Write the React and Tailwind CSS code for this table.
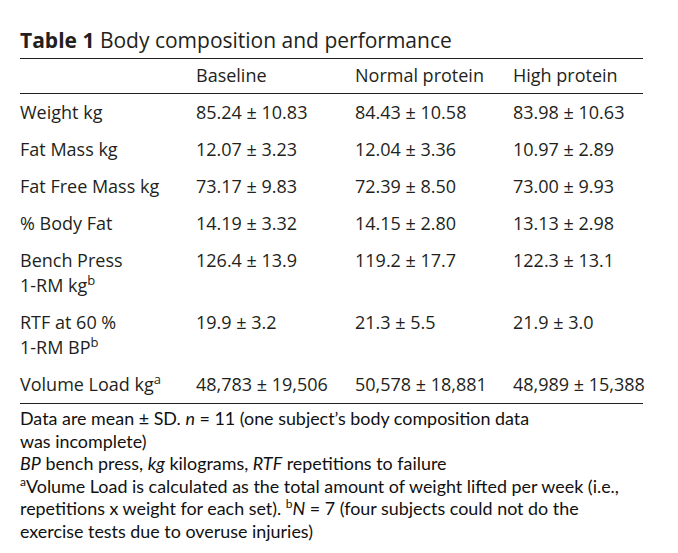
import React from "react";

const Sup = ({ children }) => (
  <sup className="text-[13px] top-[-0.55em]">{children}</sup>
);

const rows = [
  { label: <>Weight kg</>, v: ["85.24 ± 10.83", "84.43 ± 10.58", "83.98 ± 10.63"] },
  { label: <>Fat Mass kg</>, v: ["12.07 ± 3.23", "12.04 ± 3.36", "10.97 ± 2.89"] },
  { label: <>Fat Free Mass kg</>, v: ["73.17 ± 9.83", "72.39 ± 8.50", "73.00 ± 9.93"] },
  { label: <>% Body Fat</>, v: ["14.19 ± 3.32", "14.15 ± 2.80", "13.13 ± 2.98"] },
  {
    label: (
      <>
        Bench Press
        <br />
        1-RM kg<Sup>b</Sup>
      </>
    ),
    v: ["126.4 ± 13.9", "119.2 ± 17.7", "122.3 ± 13.1"],
  },
  {
    label: (
      <>
        RTF at 60 %
        <br />
        1-RM BP<Sup>b</Sup>
      </>
    ),
    v: ["19.9 ± 3.2", "21.3 ± 5.5", "21.9 ± 3.0"],
  },
  {
    label: (
      <>
        Volume Load kg<Sup>a</Sup>
      </>
    ),
    v: ["48,783 ± 19,506", "50,578 ± 18,881", "48,989 ± 15,388"],
  },
];

export default function App() {
  return (
    <div className="w-[678px] h-[553px] bg-white text-[#231f20] overflow-hidden">
      <div className="pl-[20px] pt-[26px] w-[643px]">
        <div
          className="text-[21px] leading-[28px] pb-[4px] border-b-[1.5px] border-[#231f20] whitespace-nowrap"
          style={{ fontFamily: '"Open Sans", sans-serif' }}
        >
          <span className="font-bold">Table 1</span> Body composition and performance
        </div>
        <div style={{ fontFamily: '"Open Sans", sans-serif' }} className="text-[18px] leading-[25px]">
          <div className="grid grid-cols-[176px_159px_158px_1fr] pt-[4px] pb-[5px] border-b border-[#231f20]">
            <div></div>
            <div>Baseline</div>
            <div>Normal protein</div>
            <div>High protein</div>
          </div>
          <div className="border-b-[1.5px] border-[#231f20]">
            {rows.map((r, i) => (
              <div key={i} className="grid grid-cols-[176px_159px_158px_1fr] py-[6px]">
                <div>{r.label}</div>
                {r.v.map((x, j) => (
                  <div key={j} className="whitespace-nowrap">{x}</div>
                ))}
              </div>
            ))}
          </div>
        </div>
        <div
          className="text-[17.9px] leading-[22.6px] pt-[3px] text-[#111]"
          style={{ fontFamily: 'Lato, sans-serif' }}
        >
          <div>
            Data are mean ± SD. <i>n</i> = 11 (one subject’s body composition data
            <br />
            was incomplete)
          </div>
          <div>
            <i>BP</i> bench press, <i>kg</i> kilograms, <i>RTF</i> repetitions to failure
          </div>
          <div>
            <sup className="text-[12px] top-[-0.6em]">a</sup>Volume Load is calculated as the total amount of weight lifted per week (i.e.,
            <br />
            repetitions x weight for each set). <sup className="text-[12px] top-[-0.6em]">b</sup>
            <i>N</i> = 7 (four subjects could not do the
            <br />
            exercise tests due to overuse injuries)
          </div>
        </div>
      </div>
    </div>
  );
}
